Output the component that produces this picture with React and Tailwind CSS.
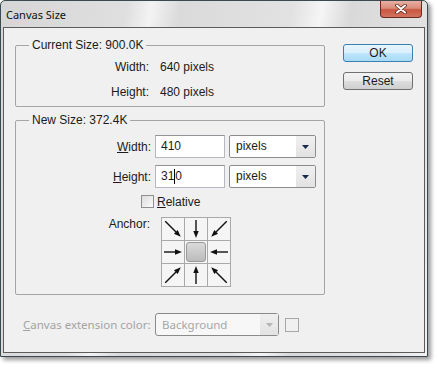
import React from 'react';

const ROTATIONS = [-45, 0, 45, -90, null, 90, -135, 180, 135];

function Arrow({ rot }) {
  const diag = rot % 90 !== 0;
  return (
    <svg width="22" height="22" viewBox="0 0 22 22">
      <g transform={`rotate(${rot} 11 11)`}>
        <line x1="11" y1={diag ? 0 : 2} x2="11" y2={diag ? 16 : 14} stroke="#111" strokeWidth="1.4" />
        {diag ? (
          <polygon points="8.3,15 13.7,15 11,22" fill="#111" />
        ) : (
          <polygon points="8.3,13 13.7,13 11,20" fill="#111" />
        )}
      </g>
    </svg>
  );
}

function AnchorGrid() {
  return (
    <div className="grid grid-cols-[22px_22px_22px] gap-px bg-[#a9a9a9] p-px w-[70px] h-[70px]">
      {ROTATIONS.map((r, i) =>
        r === null ? (
          <div key={i} className="bg-[#f5f5f5] p-px">
            <div className="w-full h-full rounded-[3px] border border-[#9a9a9a] bg-[linear-gradient(#dadada,#bcbcbc)]" />
          </div>
        ) : (
          <div key={i} className="bg-[#f5f5f5] overflow-hidden">
            <Arrow rot={r} />
          </div>
        )
      )}
    </div>
  );
}

function UnitSelect() {
  return (
    <div className="ml-[4px] w-[87px] h-[23px] flex border border-[#8c8c8c] rounded-[2px] bg-white">
      <div className="flex-1 pl-[6px] leading-[21px]">pixels</div>
      <div className="w-[19px] bg-[linear-gradient(#f0f0f0,#e2e2e2)] flex items-center justify-center">
        <svg width="7" height="4" viewBox="0 0 7 4">
          <polygon points="0,0 7,0 3.5,4" fill="#1a2a4a" />
        </svg>
      </div>
    </div>
  );
}

export default function App() {
  return (
    <div className="w-[437px] h-[367px] bg-white font-['Liberation_Sans',Arial,sans-serif] text-[12px] text-[#1b1b1b]">
      <div className="w-[428px] h-[357px] flex flex-col border border-[#3b4a4c] rounded-t-[5px] shadow-[3px_3px_4px_rgba(0,0,0,0.4)] bg-[linear-gradient(100deg,#d6d6d6_0%,#dfdfdf_26%,#f3f3f3_31%,#dadada_37%,#e2e2e2_60%,#f5f5f5_66%,#d9d9d9_72%,#e4e4e4_92%,#f2f2f2_100%)]">
        {/* title bar */}
        <div className="h-[26px] flex items-start justify-between">
          <div className="pl-[5px] pt-[7px] leading-[14px] text-[11px] text-[#111] font-['Noto_Sans',sans-serif]">Canvas Size</div>
          <div className="mr-[5px] w-[42px] h-[17px] rounded-b-[4px] border border-t-0 border-[#6b2a20] bg-[linear-gradient(#e6b0a3,#d98c79_45%,#c9553f_55%,#d37560)] flex items-center justify-center">
            <svg width="12" height="10" viewBox="0 0 12 10">
              <path d="M2 1.5 L10 8.5 M10 1.5 L2 8.5" stroke="#5a2418" strokeWidth="3.6" strokeLinecap="round" />
              <path d="M2 1.5 L10 8.5 M10 1.5 L2 8.5" stroke="#fff" strokeWidth="2" strokeLinecap="round" />
            </svg>
          </div>
        </div>

        {/* client area */}
        <div className="mx-[2px] mb-[3px] flex-1 border border-[#5c5c5c] bg-[#f0f0f0] flex flex-col">
          <div className="flex">
            <div className="ml-[11px] w-[310px]">
              <fieldset className="mt-[10px] border border-[#a5a5a5] rounded-[2px] pt-[2px] pb-[2px]">
                <legend className="ml-[13px] px-[3px] leading-[14px]">Current Size: 900.0K</legend>
                <div className="h-[25px] flex items-center">
                  <div className="w-[133px] text-right">Width:</div>
                  <div className="ml-[11px]">640 pixels</div>
                </div>
                <div className="h-[25px] flex items-center">
                  <div className="w-[133px] text-right">Height:</div>
                  <div className="ml-[11px]">480 pixels</div>
                </div>
              </fieldset>

              <fieldset className="mt-[6px] border border-[#a5a5a5] rounded-[2px] pt-[8px] pb-[7px]">
                <legend className="ml-[13px] px-[3px] leading-[14px]">New Size: 372.4K</legend>
                <div className="flex items-center">
                  <div className="w-[135px] text-right"><span className="underline">W</span>idth:</div>
                  <div className="ml-[4px] w-[70px] h-[23px] border border-[#b4b9bf] border-t-[#8f9296] bg-white pl-[5px] leading-[21px]">410</div>
                  <UnitSelect />
                </div>
                <div className="mt-[7px] flex items-center">
                  <div className="w-[135px] text-right"><span className="underline">H</span>eight:</div>
                  <div className="ml-[4px] w-[70px] h-[23px] border border-[#b4b9bf] border-t-[#8f9296] bg-white pl-[5px] leading-[21px] flex">
                    31<span className="w-px h-[15px] mt-[3px] bg-black" />0
                  </div>
                  <UnitSelect />
                </div>
                <div className="mt-[7px] h-[13px] flex items-center pl-[125px]">
                  <div className="w-[13px] h-[13px] border border-[#8e8f8f] bg-[linear-gradient(135deg,#dcdcdc,#fbfbfb)]" />
                  <div className="ml-[3px] leading-[14px]"><span className="underline">R</span>elative</div>
                </div>
                <div className="mt-[9px] flex items-start">
                  <div className="w-[134px] text-right leading-[14px]">Anchor:</div>
                  <div className="ml-[11px]"><AnchorGrid /></div>
                </div>
              </fieldset>
            </div>

            <div className="ml-[18px] mt-[16px] flex flex-col">
              <div className="w-[70px] h-[18px] rounded-[3px] border border-[#3c7fb1] bg-[linear-gradient(#e8f5fc,#d9f0fc_48%,#bee6fd_52%,#a7d9f5)] flex items-center justify-center leading-[14px]">OK</div>
              <div className="mt-[10px] w-[70px] h-[18px] rounded-[3px] border border-[#707070] bg-[linear-gradient(#f2f2f2,#ebebeb_48%,#dddddd_52%,#cfcfcf)] flex items-center justify-center leading-[14px]">Reset</div>
            </div>
          </div>

          <div className="mt-[18px] ml-[19px] flex items-center">
            <div className="w-[132px] text-[11.5px] text-[#a3a3a3] font-['Noto_Sans',sans-serif]"><span className="underline">C</span>anvas extension color:</div>
            <div className="w-[124px] h-[23px] flex border border-[#8a8a8a] rounded-[3px] bg-[#f7f7f7]">
              <div className="flex-1 pl-[6px] leading-[21px] text-[11.5px] text-[#a6a6a6] font-['Noto_Sans',sans-serif]">Background</div>
              <div className="w-[18px] bg-[linear-gradient(#efefef,#e2e2e2)] flex items-center justify-center">
                <svg width="7" height="4" viewBox="0 0 7 4">
                  <polygon points="0,0 7,0 3.5,4" fill="#b5b5b5" />
                </svg>
              </div>
            </div>
            <div className="ml-[6px] w-[14px] h-[14px] border border-[#a8a8a8]" />
          </div>
        </div>
      </div>
    </div>
  );
}
